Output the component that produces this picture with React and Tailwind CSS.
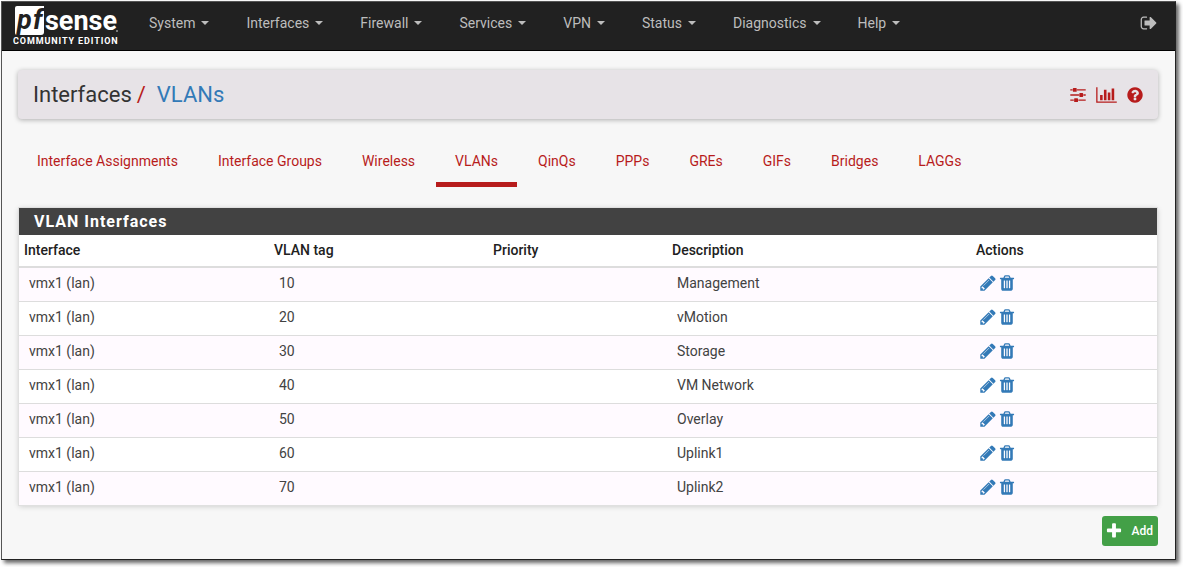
import React from "react";

const paths = {
  pencil:
    "M491 1536l91-91-235-235-91 91v107h128v128h107zm523-928q0-22-22-22-10 0-17 7l-542 542q-7 7-7 17 0 22 22 22 10 0 17-7l542-542q7-7 7-17zm-54-192l416 416-832 832h-416v-416zm683 96q0 53-37 90l-166 166-416-416 166-165q36-38 90-38 53 0 91 38l235 234q37 39 37 91z",
  trash:
    "M704 1376v-704q0-14-9-23t-23-9h-64q-14 0-23 9t-9 23v704q0 14 9 23t23 9h64q14 0 23-9t9-23zm256 0v-704q0-14-9-23t-23-9h-64q-14 0-23 9t-9 23v704q0 14 9 23t23 9h64q14 0 23-9t9-23zm256 0v-704q0-14-9-23t-23-9h-64q-14 0-23 9t-9 23v704q0 14 9 23t23 9h64q14 0 23-9t9-23zm-544-992h448l-48-117q-7-9-17-11h-317q-10 2-17 11zm928 32v64q0 14-9 23t-23 9h-96v948q0 83-47 143.5t-113 60.5h-832q-66 0-113-58.5t-47-141.5v-952h-96q-14 0-23-9t-9-23v-64q0-14 9-23t23-9h309l70-167q15-37 54-63t79-26h320q40 0 79 26t54 63l70 167h309q14 0 23 9t9 23z",
  plus:
    "M1600 736v192q0 40-28 68t-68 28h-416v416q0 40-28 68t-68 28h-192q-40 0-68-28t-28-68v-416h-416q-40 0-68-28t-28-68v-192q0-40 28-68t68-28h416v-416q0-40 28-68t68-28h192q40 0 68 28t28 68v416h416q40 0 68 28t28 68z",
  sliders:
    "M128 320h224v128h-224zM800 320h864v128h-864zM448 192h256q64 0 64 64v256q0 64-64 64h-256q-64 0-64-64v-256q0-64 64-64zM128 832h864v128h-864zM1440 832h224v128h-224zM1088 704h256q64 0 64 64v256q0 64-64 64h-256q-64 0-64-64v-256q0-64 64-64zM128 1344h352v128h-352zM928 1344h736v128h-736zM576 1216h256q64 0 64 64v256q0 64-64 64h-256q-64 0-64-64v-256q0-64 64-64z",
  chart:
    "M640 896v512h-256v-512h256zm384-512v1024h-256v-1024h256zm1024 1152v128h-2048v-1536h128v1408h1920zm-640-896v768h-256v-768h256zm384-384v1152h-256v-1152h256z",
  help:
    "M1024 1376v-192q0-14-9-23t-23-9h-192q-14 0-23 9t-9 23v192q0 14 9 23t23 9h192q14 0 23-9t9-23zm256-672q0-88-55.5-163t-138.5-116-170-41q-243 0-371 213-15 24 8 42l132 100q7 6 19 6 16 0 25-12 53-68 86-92 34-24 86-24 48 0 85.5 26t37.5 59q0 38-20 61t-68 45q-63 28-115.5 86.5t-52.5 125.5v36q0 14 9 23t23 9h192q14 0 23-9t9-23q0-19 21.5-49.5t54.5-49.5q32-18 49-28.5t46-35 44.5-48 28-60.5 12.5-81zm384 192q0 209-103 385.5t-279.5 279.5-385.5 103-385.5-103-279.5-279.5-103-385.5 103-385.5 279.5-279.5 385.5-103 385.5 103 279.5 279.5 103 385.5z",
  signOut:
    "M704 1440q0 4 1 20t.5 26.5-3 23.5-10 19.5-20.5 6.5h-320q-119 0-203.5-84.5t-84.5-203.5v-704q0-119 84.5-203.5t203.5-84.5h320q13 0 22.5 9.5t9.5 22.5q0 4 1 20t.5 26.5-3 23.5-10 19.5-20.5 6.5h-320q-66 0-113 47t-47 113v704q0 66 47 113t113 47h312l11.5 1 11.5 3 8 5.5 7 9 2 13.5zm928-544q0 26-19 45l-544 544q-19 19-45 19t-45-19-19-45v-288h-448q-26 0-45-19t-19-45v-384q0-26 19-45t45-19h448v-288q0-26 19-45t45-19 45 19l544 544q19 19 19 45z",
};

function Icon({ name, className, wide = false }) {
  return (
    <svg viewBox={wide ? "0 0 2048 1792" : "0 0 1792 1792"} fill="currentColor" className={className} aria-hidden="true">
      <path d={paths[name]} />
    </svg>
  );
}

function Logo() {
  return (
    <svg width="108" height="46" viewBox="0 -4 108 46" role="img" aria-label="pfSense Community Edition" fontFamily="Roboto, 'Liberation Sans', sans-serif">
      <path d="M4 0h27v26q0 3-3 3H4q-2 0-2-2V2q0-2 2-2z" fill="#fff" />
      <text x="4" y="23" fontSize="27" fontWeight="700" fontStyle="italic" fill="#212121">p</text>
      <text x="20" y="23" fontSize="27" fontWeight="700" fontStyle="italic" fill="#212121">f</text>
      <text x="32" y="24" fontSize="27" fontWeight="700" fill="#fff">sense</text>
      <circle cx="104" cy="25" r="1" fill="#999" />
      <text x="0" y="38" fontSize="9" fontWeight="700" letterSpacing="0.9" fill="#fff">COMMUNITY EDITION</text>
    </svg>
  );
}

const menus = ["System", "Interfaces", "Firewall", "Services", "VPN", "Status", "Diagnostics", "Help"];

const tabs = ["Interface Assignments", "Interface Groups", "Wireless", "VLANs", "QinQs", "PPPs", "GREs", "GIFs", "Bridges", "LAGGs"];

const vlans = [
  { tag: 10, description: "Management" },
  { tag: 20, description: "vMotion" },
  { tag: 30, description: "Storage" },
  { tag: 40, description: "VM Network" },
  { tag: 50, description: "Overlay" },
  { tag: 60, description: "Uplink1" },
  { tag: 70, description: "Uplink2" },
];

function NavBar() {
  return (
    <header className="flex h-[49px] items-start border-b border-black bg-[#212121] pr-[17px] pl-[11px] text-[#bdbdbd]">
      <a href="#home" className="shrink-0">
        <Logo />
      </a>
      <nav className="ml-[9px] flex">
        {menus.map((menu) => (
          <button key={menu} type="button" aria-haspopup="menu" className="flex items-center gap-[6px] pt-[11px] pr-[18px] pl-[19px] text-[14px] leading-5 whitespace-nowrap">
            {menu}
            <span className="border-x-4 border-t-4 border-x-transparent border-t-current" />
          </button>
        ))}
      </nav>
      <button type="button" aria-label="Logout" className="mt-3 ml-auto">
        <Icon name="signOut" className="size-[18px]" />
      </button>
    </header>
  );
}

function Breadcrumb() {
  return (
    <div className="mr-[17px] ml-4 mt-[19px] flex h-[49px] items-center justify-between rounded-sm bg-[#e7e3e7] pr-[14px] pl-[15px] shadow-[0_1px_5px_rgba(0,0,0,0.3)]">
      <h1 className="flex text-[22px] leading-6 text-[#333]">
        Interfaces
        <span className="mr-[11px] ml-[5px] text-[#b71c1c]">/</span>
        <a href="#vlans" className="text-[#337ab7]">VLANs</a>
      </h1>
      <div className="flex items-center gap-[9px] text-[#b71c1c]">
        <a href="#settings" aria-label="Settings"><Icon name="sliders" className="size-[18px]" /></a>
        <a href="#graphs" aria-label="Graphs"><Icon name="chart" wide className="h-[18px] w-[21px]" /></a>
        <a href="#help" aria-label="Help"><Icon name="help" className="size-[18px]" /></a>
      </div>
    </div>
  );
}

function Tabs() {
  return (
    <nav className="mt-4 flex gap-[2px] px-4">
      {tabs.map((tab) => (
        <a
          key={tab}
          href={"#" + tab}
          aria-current={tab === "VLANs" ? "page" : undefined}
          className={
            "border-b-5 px-[19px] pt-4 pb-[11px] text-[14px] leading-5 whitespace-nowrap text-[#b71c1c] " +
            (tab === "VLANs" ? "border-[#b71c1c]" : "border-transparent")
          }
        >
          {tab}
        </a>
      ))}
    </nav>
  );
}

function VlanTable() {
  return (
    <section className="mr-[18px] ml-[17px] mt-[21px] bg-white shadow-[0_0_0_1px_#e0e0e0,0_1px_6px_rgba(0,0,0,0.2)]">
      <h2 className="bg-[#424242] px-[15px] py-[3px] text-[16px] leading-[21px] font-bold tracking-[1px] text-white">VLAN Interfaces</h2>
      <table className="w-full table-fixed text-left text-[14px] leading-5 text-[#424242]">
        <colgroup>
          <col className="w-[250px]" />
          <col className="w-[219px]" />
          <col className="w-[179px]" />
          <col className="w-[304px]" />
          <col className="w-[186px]" />
        </colgroup>
        <thead>
          <tr className="h-8 border-b-2 border-[#ddd] text-[#212121]">
            <th className="px-[5px] pb-[2px] font-medium">Interface</th>
            <th className="px-[5px] pb-[2px] font-medium">VLAN tag</th>
            <th className="px-[5px] pb-[2px] font-medium">Priority</th>
            <th className="px-[5px] pb-[2px] font-medium">Description</th>
            <th className="px-[5px] pb-[2px] font-medium">Actions</th>
          </tr>
        </thead>
        <tbody>
          {vlans.map((vlan) => (
            <tr key={vlan.tag} className="h-[34px] border-b border-[#ddd] last:border-b-0 odd:bg-[#fffaff]">
              <td className="px-[10px] pb-[2px]">vmx1 (lan)</td>
              <td className="px-[10px] pb-[2px]">{vlan.tag}</td>
              <td />
              <td className="px-[10px] pb-[2px]">{vlan.description}</td>
              <td className="px-2 pb-[3px]">
                <div className="flex items-center gap-px text-[#337ab7]">
                  <a href="#edit" aria-label={"Edit VLAN " + vlan.tag}><Icon name="pencil" className="size-[18px]" /></a>
                  <a href="#delete" aria-label={"Delete VLAN " + vlan.tag}><Icon name="trash" className="size-[18px]" /></a>
                </div>
              </td>
            </tr>
          ))}
        </tbody>
      </table>
    </section>
  );
}

export default function App() {
  return (
    <div className="min-h-screen bg-white pt-px pr-[7px] pb-[7px] pl-px font-[Roboto,'Liberation_Sans',sans-serif]">
      <main className="border border-[#555] border-r-[#222] border-b-[#222] bg-[#f7f7f7] pb-[13px] shadow-[3px_3px_4px_rgba(0,0,0,0.6)]">
        <NavBar />
        <Breadcrumb />
        <Tabs />
        <VlanTable />
        <div className="mt-[11px] flex justify-end px-[17px]">
          <button type="button" className="flex h-[30px] items-center gap-[9px] rounded-[3px] bg-[#43a047] pr-[5px] pl-[3px] text-[12px] font-medium text-white">
            <Icon name="plus" className="size-[18px]" />
            Add
          </button>
        </div>
      </main>
    </div>
  );
}
